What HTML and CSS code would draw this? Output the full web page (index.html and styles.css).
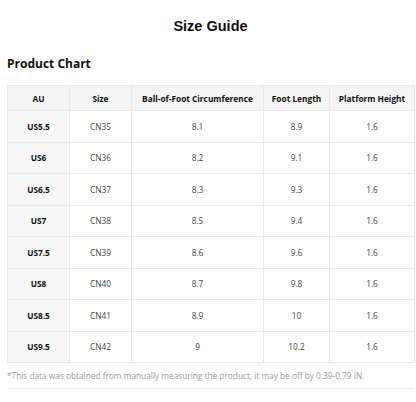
FILE: index.html
```html
<!DOCTYPE html>
<html lang="en">
<head>
    <meta charset="UTF-8">
    <meta name="viewport" content="width=device-width, initial-scale=1.0">
    <title>Size Guide</title>
    <link rel="stylesheet" href="styles.css">
</head>
<body>
    <div class="guide">
        <h1 class="title">Size Guide</h1>
        <h2 class="sub">Product Chart</h2>

        <table class="chart">
            <thead>
                <tr>
                    <th class="c1">AU</th>
                    <th class="c2">Size</th>
                    <th class="c3">Ball-of-Foot Circumference</th>
                    <th class="c4">Foot Length</th>
                    <th class="c5">Platform Height</th>
                </tr>
            </thead>
            <tbody>
                <tr><th>US5.5</th><td>CN35</td><td>8.1</td><td>8.9</td><td>1.6</td></tr>
                <tr><th>US6</th><td>CN36</td><td>8.2</td><td>9.1</td><td>1.6</td></tr>
                <tr><th>US6.5</th><td>CN37</td><td>8.3</td><td>9.3</td><td>1.6</td></tr>
                <tr><th>US7</th><td>CN38</td><td>8.5</td><td>9.4</td><td>1.6</td></tr>
                <tr><th>US7.5</th><td>CN39</td><td>8.6</td><td>9.6</td><td>1.6</td></tr>
                <tr><th>US8</th><td>CN40</td><td>8.7</td><td>9.8</td><td>1.6</td></tr>
                <tr><th>US8.5</th><td>CN41</td><td>8.9</td><td>10</td><td>1.6</td></tr>
                <tr><th>US9.5</th><td>CN42</td><td>9</td><td>10.2</td><td>1.6</td></tr>
            </tbody>
        </table>

        <p class="note">*This data was obtained from manually measuring the product, it may be off by 0.39-0.79 IN.</p>
    </div>
</body>
</html>
```

FILE: styles.css
```css
*{
    margin:0;
    padding:0;
    box-sizing:border-box;
}
body{
    background:#fff;
    font-family:"Open Sans","Noto Sans",sans-serif;
    color:#222;
}
.guide{
    padding:18px 2px 0 7px;
}
.title{
    font-family:"Liberation Sans",Arial,sans-serif;
    font-size:14.5px;
    line-height:17px;
    font-weight:bold;
    text-align:center;
    color:#111;
}
.sub{
    font-size:12px;
    line-height:16px;
    font-weight:bold;
    color:#111;
    margin:21px 0 13px;
}
.chart{
    width:407px;
    border-collapse:collapse;
    table-layout:fixed;
    font-size:8.3px;
}
.chart th,
.chart td{
    border:1px solid #e9e9e9;
    text-align:center;
    height:31.5px;
}
.chart thead th{
    background:#f5f5f5;
    height:25px;
    font-weight:bold;
    color:#111;
}
.chart tbody th{
    background:#f7f7f7;
    font-weight:bold;
    color:#111;
}
.chart td{
    color:#444;
}
.c1{ width:62px; }
.c2{ width:62px; }
.c3{ width:132px; }
.c4{ width:66px; }
.c5{ width:85px; }
.note{
    font-size:8.3px;
    line-height:12px;
    color:#999;
    padding:7px 0 6px;
    border-bottom:1px solid #ececec;
}
```
